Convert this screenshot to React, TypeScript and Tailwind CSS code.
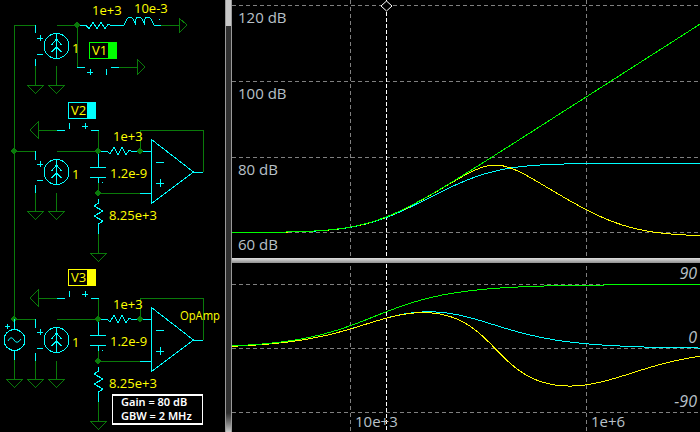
import React from 'react';

type C = [number, number];
const add = (a: C, b: C): C => [a[0] + b[0], a[1] + b[1]];
const mul = (a: C, b: C): C => [a[0] * b[0] - a[1] * b[1], a[0] * b[1] + a[1] * b[0]];
const div = (a: C, b: C): C => {
  const d = b[0] * b[0] + b[1] * b[1];
  return [(a[0] * b[0] + a[1] * b[1]) / d, (a[1] * b[0] - a[0] * b[1]) / d];
};

const R1 = 1e3;
const R2 = 8.25e3;
const CAP = 1.2e-9;
const IND = 10e-3;

const freqAt = (x: number) => 1e4 * Math.pow(10, (x - 350.5) / 118);

function zIdeal(f: number): C {
  return [R1, 2 * Math.PI * f * IND];
}

// gyrator with follower gain G
function zGyrator(f: number, gain: C): C {
  const s: C = [0, 2 * Math.PI * f];
  const one: C = [1, 0];
  const sCR2 = mul(s, [CAP * R2, 0]);
  const num = add(one, sCR2);
  const left = add(one, mul(sCR2, [1 - gain[0], -gain[1]]));
  const den = add([left[0] / R1, left[1] / R1], mul(s, [CAP, 0]));
  return div(num, den);
}

function opampFollower(f: number): C {
  const a = div([1e4, 0], [1, f / 200]);
  return div(a, add([1, 0], a));
}

const curves: { color: string; z: (f: number) => C }[] = [
  { color: '#00ffff', z: (f) => zGyrator(f, [1, 0]) },
  { color: '#ffff00', z: (f) => zGyrator(f, opampFollower(f)) },
  { color: '#00ff00', z: zIdeal },
];

function points(z: (f: number) => C, mode: 'mag' | 'phase') {
  const out: string[] = [];
  for (let x = 232; x <= 700; x += 2) {
    const v = z(freqAt(x));
    const y =
      mode === 'mag'
        ? 232.5 - (20 * Math.log10(Math.hypot(v[0], v[1])) - 60) * 3.775
        : 348.5 - (Math.atan2(v[1], v[0]) * 180) / Math.PI * (64 / 90);
    out.push(`${x - 232},${y.toFixed(1)}`);
  }
  return out.join(' ');
}

const WIRE = '#0a7a0a';
const CY = '#00ffff';
const YE = '#ffff00';

function Ground({ x, y }: { x: number; y: number }) {
  return <polygon points={`${x - 8.5},${y} ${x + 8.5},${y} ${x},${y + 8.5}`} fill="none" stroke={WIRE} />;
}

function Node({ x, y }: { x: number; y: number }) {
  return <circle cx={x} cy={y} r={2.6} fill={WIRE} />;
}

function Source({ x, y }: { x: number; y: number }) {
  return (
    <g fill="none" stroke={CY}>
      <circle cx={x} cy={y} r={12.5} />
      <path d={`M${x} ${y - 12.5}V${y + 12.5}M${x - 5} ${y - 1}L${x} ${y - 7}L${x + 5} ${y - 1}M${x - 5} ${y + 6}L${x} ${y + 1}L${x + 5} ${y + 6}`} />
    </g>
  );
}

function Label({ x, y, children, width }: { x: number; y: number; children: React.ReactNode; width?: number }) {
  return (
    <text
      x={x}
      y={y}
      fill={YE}
      fontSize={13}
      textLength={width}
      lengthAdjust={width ? 'spacingAndGlyphs' : undefined}
      fontFamily="'Open Sans', sans-serif"
    >
      {children}
    </text>
  );
}

// one gyrator block, y is the top rail of the feedback wire
function Gyrator({ y, opamp }: { y: number; opamp?: boolean }) {
  const mid = y + 21;
  const tip = y + 42;
  const lo = y + 63;
  return (
    <g>
      <path
        d={`M38 ${y}H57M98.5 ${y}V${mid}M98 ${mid}H56.5M14 ${mid}H35.5M35.5 ${mid + 42}V${mid + 60}M56.5 ${mid + 42}V${mid + 60}M98.5 ${mid + 32}V${lo}M98 ${lo}H140M98.5 ${lo + 41}V${lo + 60}M203.5 ${tip}V${y}H140V${mid}`}
        fill="none"
        stroke={WIRE}
      />
      <polygon points={`38,${y - 8} 38,${y + 8} 30,${y}`} fill="none" stroke={WIRE} />
      <path
        d={`M57 ${y}H65M69.5 ${y - 7}V${y - 1}M82 ${y - 4}H88M85.5 ${y - 7}V${y - 1}M91 ${y}H98.5M35.5 ${mid}V${mid + 9}M37 ${mid + 13}H43M40.5 ${mid + 10}V${mid + 16}M37 ${mid + 29}H43M35.5 ${mid + 34}V${mid + 42}M98.5 ${mid}V${mid + 16}M90 ${mid + 16.5}H106M90 ${mid + 26}H106M98.5 ${mid + 26}V${mid + 32}M102.5 ${mid + 31}V${mid + 32}M98.5 ${lo + 6}V${lo + 10}L94 ${lo + 13}L103 ${lo + 18}L94 ${lo + 23}L103 ${lo + 28}L98.5 ${lo + 31}V${lo + 41}M98 ${mid}H107L110 ${mid + 3}L114 ${mid - 4}L118 ${mid + 4}L122 ${mid - 4}L126 ${mid + 4}L129 ${mid - 1}L131 ${mid}H151M140 ${lo}H151M156 ${mid + 11}H164M156 ${mid + 32}H164M160 ${mid + 28}V${mid + 36}M193.5 ${tip}H203`}
        fill="none"
        stroke={CY}
      />
      <polygon points={`151.5,${y + 9.5} 151.5,${y + 73.5} 193.5,${tip}`} fill="none" stroke={CY} />
      <Source x={56.5} y={mid + 21} />
      <Ground x={35.5} y={mid + 60} />
      <Ground x={56.5} y={mid + 60} />
      <Ground x={98.5} y={lo + 60} />
      <Node x={98} y={mid} />
      <Node x={98} y={lo} />
      <Node x={140} y={mid} />
      <Label x={72} y={mid + 28}>1</Label>
      <Label x={113} y={y + 11}>1e+3</Label>
      <Label x={110} y={lo - 15}>1.2e-9</Label>
      <Label x={109} y={lo + 27}>8.25e+3</Label>
      {opamp && <Label x={180} y={y + 22} width={40}>OpAmp</Label>}
    </g>
  );
}

function Tag({ x, y, name, color }: { x: number; y: number; name: string; color: string }) {
  return (
    <g>
      <rect x={x + 0.5} y={y + 0.5} width={27} height={16} fill="none" stroke={color} />
      <rect x={x + 19} y={y} width={9} height={17} fill={color} />
      <Label x={x + 3} y={y + 13}>{name}</Label>
    </g>
  );
}

function Schematic() {
  return (
    <svg width={225} height={432} className="block shrink-0" shapeRendering="crispEdges">
      <path d="M14.5 25V319M14.5 25H35.5M35.5 66V85M56.5 25H77M77 25V67M119 67H137M56.5 66V85M161 25H179" fill="none" stroke={WIRE} />
      <polygon points="179,18 179,33 187,25" fill="none" stroke={WIRE} />
      <polygon points="137,59 137,75 145,67" fill="none" stroke={WIRE} />
      <path
        d="M35.5 25V33M37 38H43M40.5 35V41M37 54H43M35.5 59V66M77 67H85M87 72H93M90.5 69V75M106.5 69V75M111 67H119M77 25H86L89 29L93 22L97 29L101 22L105 29L108 24L110 25H124Q127 17 130 17Q133 17 136 25Q134 17 139 17Q142 17 145 25Q143 17 148 17Q151 17 154 25L158 25H161M159 19V20"
        fill="none"
        stroke={CY}
      />
      <Source x={56.5} y={46} />
      <Ground x={35.5} y={85} />
      <Ground x={56.5} y={85} />
      <Node x={77} y={25} />
      <Label x={72} y={53}>1</Label>
      <Label x={92} y={15}>1e+3</Label>
      <Label x={134} y={13}>10e-3</Label>
      <Tag x={89} y={42} name="V1" color="#00ff00" />

      <Tag x={68} y={102} name="V2" color={CY} />
      <Gyrator y={130} />
      <Node x={14} y={151} />

      <Tag x={68} y={269} name="V3" color={YE} />
      <Gyrator y={298} opamp />
      <Node x={14} y={319} />
      <path d="M14.5 360V379" fill="none" stroke={WIRE} />
      <path d="M14.5 319V329M14.5 351V360M5 326H10M7.5 323.5V328.5" fill="none" stroke={CY} />
      <circle cx={14.5} cy={340} r={10.5} fill="none" stroke={CY} />
      <path d="M8 341Q11 335 14 340Q17 345 21 339" fill="none" stroke={CY} shapeRendering="auto" />
      <Ground x={14.5} y={379} />

      <rect x={112.5} y={395} width={90} height={29} fill="#000" stroke="#fff" strokeWidth={1.5} />
      <text x={121} y={406} fill="#fff" fontSize={11} fontWeight={600} fontFamily="'Noto Sans', sans-serif">Gain = 80 dB</text>
      <text x={121} y={420} fill="#fff" fontSize={11} fontWeight={600} fontFamily="'Noto Sans', sans-serif">GBW = 2 MHz</text>
    </svg>
  );
}

function Grid({ h, rows }: { h: number; rows: number[] }) {
  return (
    <g shapeRendering="crispEdges">
      {rows.map((y) => (
        <line key={y} x1={0} x2={468} y1={y} y2={y} stroke="#808080" strokeDasharray="4 3" />
      ))}
      <line x1={118.5} x2={118.5} y1={0} y2={h} stroke="#808080" strokeDasharray="4 3" />
      <line x1={354.5} x2={354.5} y1={0} y2={h} stroke="#808080" strokeDasharray="4 3" />
      <line x1={154.5} x2={154.5} y1={0} y2={h} stroke="#ffffff" strokeDasharray="4 2" />
    </g>
  );
}

const axisText = "'Open Sans', sans-serif";

function GainPlot() {
  return (
    <svg width={468} height={258} className="block">
      <Grid h={258} rows={[5.5, 81.5, 157.5, 232.5]} />
      <polygon points="154.5,1 160,6 154.5,11 149,6" fill="#000" stroke="#fff" />
      {[['120 dB', 23], ['100 dB', 99], ['80 dB', 175], ['60 dB', 250]].map(([t, y]) => (
        <text key={t} x={6} y={y} fill="#b8c0c8" fontSize={15} fontFamily={axisText}>{t}</text>
      ))}
      {curves.map((c) => (
        <polyline key={c.color} points={points(c.z, 'mag')} fill="none" stroke={c.color} strokeWidth={1} shapeRendering="crispEdges" />
      ))}
    </svg>
  );
}

function PhasePlot() {
  return (
    <svg width={468} height={169} viewBox="0 263 468 169" className="block">
      <Grid h={432} rows={[284.5, 348.5, 412.5]} />
      {curves.map((c) => (
        <polyline key={c.color} points={points(c.z, 'phase')} fill="none" stroke={c.color} strokeWidth={1} shapeRendering="crispEdges" />
      ))}
      {[['90', 279], ['0', 343], ['-90', 407]].map(([t, y]) => (
        <text key={t} x={465} y={y} textAnchor="end" fill="#b8c0c8" fontSize={16} fontStyle="italic" fontFamily={axisText}>{t}</text>
      ))}
      <text x={123} y={427} fill="#b8c0c8" fontSize={15} fontFamily={axisText}>10e+3</text>
      <text x={359} y={427} fill="#b8c0c8" fontSize={15} fontFamily={axisText}>1e+6</text>
    </svg>
  );
}

export default function App() {
  return (
    <div className="flex w-[700px] h-[432px] overflow-hidden bg-black">
      <Schematic />
      <div className="w-[7px] shrink-0 flex flex-col bg-[#303030] border-x border-[#9a9a9a]">
        <div className="h-[26px] bg-[#c8c8c8]" />
        <div className="mt-auto h-[19px] bg-gradient-to-b from-[#303030] to-[#c8c8c8]" />
      </div>
      <div className="flex flex-col flex-1">
        <GainPlot />
        <div className="h-[5px] shrink-0 bg-gradient-to-b from-[#e0e0e0] to-[#909090]" />
        <PhasePlot />
      </div>
    </div>
  );
}
